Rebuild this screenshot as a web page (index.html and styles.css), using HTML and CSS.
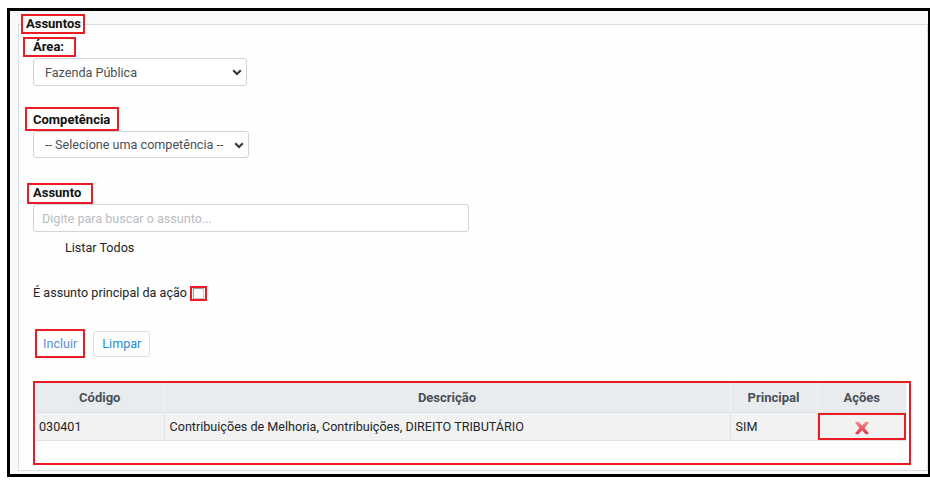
FILE: index.html
```html
<!DOCTYPE html>
<html lang="pt-BR">
<head>
<meta charset="utf-8">
<title>Assuntos</title>
<link rel="stylesheet" href="styles.css">
</head>
<body>
<div class="page">
  <div class="frame">
    <fieldset class="box">
      <legend class="legend">Assuntos</legend>
      <div class="body">
        <label class="lbl lbl-area">Área:</label>
        <div class="select-wrap sel-area">
          <select class="sel"><option>Fazenda Pública</option></select>
          <svg class="chev" width="10" height="7" viewBox="0 0 10 7"><path d="M1.2 1.3 L5 5 L8.8 1.3" fill="none" stroke="#343a40" stroke-width="2.2"/></svg>
        </div>

        <label class="lbl lbl-comp">Competência</label>
        <div class="select-wrap sel-comp">
          <select class="sel"><option>-- Selecione uma competência --</option></select>
          <svg class="chev" width="10" height="7" viewBox="0 0 10 7"><path d="M1.2 1.3 L5 5 L8.8 1.3" fill="none" stroke="#343a40" stroke-width="2.2"/></svg>
        </div>

        <label class="lbl lbl-assunto">Assunto</label>
        <input class="inp" type="text" placeholder="Digite para buscar o assunto...">

        <div class="listar">Listar Todos</div>

        <div class="principal">
          <span>É assunto principal da ação</span>
          <span class="chk-mark"><span class="chk"></span></span>
        </div>

        <div class="actions">
          <button class="btn btn-incluir">Incluir</button>
          <button class="btn btn-limpar">Limpar</button>
        </div>

        <div class="table-mark">
          <table class="grid">
            <colgroup>
              <col class="c1"><col class="c2"><col class="c3"><col class="c4">
            </colgroup>
            <thead>
              <tr><th>Código</th><th>Descrição</th><th>Principal</th><th>Ações</th></tr>
            </thead>
            <tbody>
              <tr>
                <td class="first">030401</td>
                <td>Contribuições de Melhoria, Contribuições, DIREITO TRIBUTÁRIO</td>
                <td>SIM</td>
                <td class="acoes">
                  <svg class="del" width="16" height="14" viewBox="0 0 16 14">
                    <defs>
                      <linearGradient id="xg" x1="0" y1="0" x2="0" y2="1">
                        <stop offset="0" stop-color="#f58a8c"/>
                        <stop offset="1" stop-color="#e0363c"/>
                      </linearGradient>
                    </defs>
                    <path d="M1 1.5 L4 0.5 L8 4.6 L12 0.5 L15 1.5 L10.6 7 L15 12.5 L12 13.5 L8 9.4 L4 13.5 L1 12.5 L5.4 7 Z" fill="url(#xg)"/>
                  </svg>
                </td>
              </tr>
            </tbody>
          </table>
        </div>
      </div>
    </fieldset>
  </div>
</div>
</body>
</html>
```

FILE: styles.css
```css
html, body {
  margin: 0;
  padding: 0;
  background: #ffffff;
}

body {
  font-family: Roboto, "Liberation Sans", Arial, sans-serif;
  font-size: 12.6px;
  color: #212529;
}

.page {
  padding: 8px 0 0 7px;
}

.frame {
  width: 910px;
  border: 3px solid #000;
  background: #f8f9fa;
  box-shadow: 7px 0 0 #f8f9fa;
  padding: 0 0 3px 8px;
}

.box {
  margin: 3px 0 0 0;
  padding: 0 0 5px 0;
  border: 1px solid #dcdfe2;
  background: #fefefe;
  min-inline-size: 0;
}

.legend {
  margin-left: 2px;
  padding: 0 2px 0 3px;
  border: 2px solid #ed1c24;
  font-weight: bold;
  font-size: 13px;
  line-height: 16px;
  color: #111;
}

.body {
  padding-left: 14px;
}

.lbl {
  display: block;
  width: fit-content;
  border: 2px solid #ed1c24;
  font-weight: bold;
  font-size: 13px;
  line-height: 16px;
  color: #111;
}

.lbl-area {
  margin-top: 3px;
  margin-left: -10px;
  padding: 0 10px 0 8px;
}

.lbl-comp {
  margin-top: 21px;
  margin-left: -8px;
  padding: 3px 7px 1px 6px;
}

.lbl-assunto {
  margin-top: 25px;
  margin-left: -6px;
  padding: 0 10px 1px 4px;
}

.select-wrap {
  position: relative;
}

.sel-area {
  margin-top: 1px;
  width: 214px;
  height: 28px;
}

.sel-comp {
  width: 216px;
  height: 27px;
}

.sel {
  appearance: none;
  -webkit-appearance: none;
  box-sizing: border-box;
  width: 100%;
  height: 100%;
  margin: 0;
  padding: 0 0 0 11px;
  border: 1px solid #ced4da;
  border-radius: 3px;
  background: #fff;
  font-family: inherit;
  font-size: 12.6px;
  color: #495057;
}

.chev {
  position: absolute;
  right: 5px;
  top: 50%;
  margin-top: -3px;
  pointer-events: none;
}

.inp {
  display: block;
  box-sizing: border-box;
  width: 436px;
  height: 28px;
  margin: 0;
  padding: 0 0 0 8px;
  border: 1px solid #ced4da;
  border-radius: 3px;
  background: #fff;
  font-family: inherit;
  font-size: 12.6px;
  color: #495057;
}

.inp::placeholder {
  color: #b9bdc1;
}

.listar {
  margin-top: 8px;
  margin-left: 32px;
  line-height: 16px;
  color: #212529;
}

.principal {
  margin-top: 29px;
  display: flex;
  align-items: center;
  height: 16px;
  line-height: 16px;
}

.chk-mark {
  margin-left: 3px;
  box-sizing: border-box;
  width: 17px;
  height: 15px;
  border: 2px solid #ed1c24;
  display: flex;
  align-items: center;
  justify-content: center;
}

.chk {
  box-sizing: border-box;
  width: 11px;
  height: 11px;
  border: 1px solid #9a9a9a;
  border-right-color: #c8c8c8;
  border-bottom-color: #c8c8c8;
  background: #fff;
}

.actions {
  margin-top: 28px;
  display: flex;
  align-items: center;
  height: 29px;
}

.btn {
  font-family: inherit;
  font-size: 12.6px;
  background: #fff;
  margin: 0;
  cursor: pointer;
  box-sizing: border-box;
}

.btn-incluir {
  margin-left: 2px;
  height: 29px;
  padding: 0 6px;
  border: 2px solid #ed1c24;
  color: #5a8ed4;
}

.btn-limpar {
  margin-left: 8px;
  height: 26px;
  padding: 0 8px;
  border: 1px solid #dee2e6;
  border-radius: 3px;
  color: #268ad8;
}

.table-mark {
  margin-top: 23px;
  width: fit-content;
  border: 2px solid #ed1c24;
  padding: 0 3px 22px 1px;
}

.grid {
  border-collapse: collapse;
  table-layout: fixed;
  width: 870px;
  font-size: 12.6px;
}

.c1 { width: 128px; }
.c2 { width: 566px; }
.c3 { width: 87px; }
.c4 { width: 89px; }

.grid th {
  height: 29px;
  padding: 0 5px;
  background: #e9ecef;
  color: #495057;
  font-weight: bold;
  font-size: 13px;
  text-align: center;
  border-right: 1px solid #f3f4f5;
  border-bottom: 1px solid #dee2e6;
}

.grid th:last-child {
  border-right: none;
}

.grid td {
  height: 27px;
  padding: 0 5px;
  background: #f2f2f2;
  color: #212529;
  border-right: 1px solid #dfe2e5;
  border-bottom: 1px solid #dfe2e5;
  white-space: nowrap;
}

.grid td.first {
  padding-left: 3px;
}

.grid td.acoes {
  border-right: none;
  text-align: center;
  box-shadow: inset 0 0 0 2px #ed1c24;
  padding: 0;
}

.del {
  display: inline-block;
  vertical-align: middle;
  margin-top: 2px;
}
```
